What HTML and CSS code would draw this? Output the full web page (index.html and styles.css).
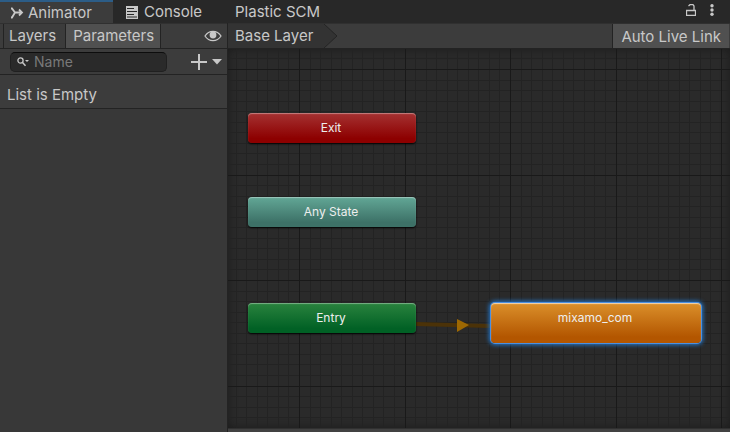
FILE: index.html
```html
<!DOCTYPE html>
<html lang="en">
<head>
<meta charset="utf-8">
<title>Animator</title>
<link rel="stylesheet" href="styles.css">
</head>
<body>
<div class="window">
  <header class="tabs">
    <button class="tab tab-active"><svg width="14" height="12" viewBox="0 0 14 12"><path d="M1 1.5H2L5 5.5H12M1 10.5H2L5 5.5M9 2.5 12 5.5 9 8.5" fill="none" stroke="currentColor" stroke-width="1.8"/></svg>Animator</button>
    <button class="tab tab-console"><svg width="12" height="13" viewBox="0 0 12 13"><path d="M0 0H12V13H0Z" fill="currentColor"/><path d="M1 2.5H8M1 5.5H11M1 8.5H8M1 11H11" stroke="#282828"/></svg>Console</button>
    <button class="tab tab-plastic">Plastic SCM</button>
    <div class="window-actions">
      <button aria-label="Lock"><svg width="10" height="12" viewBox="0 0 10 12"><path d="M.5 6.5H9.5V11.5H.5ZM8 6V2L7 .7H4L2.5 2" fill="none" stroke="currentColor" stroke-width="1.3"/></svg></button>
      <button aria-label="More"><svg width="4" height="12" viewBox="0 0 4 12"><g fill="currentColor"><circle cx="2" cy="1.7" r="1.7"/><circle cx="2" cy="6" r="1.7"/><circle cx="2" cy="10.3" r="1.7"/></g></svg></button>
    </div>
  </header>
  <div class="workspace">
    <aside class="sidebar">
      <div class="toolbar side-toolbar">
        <button class="mode">Layers</button>
        <button class="mode mode-active">Parameters</button>
        <button class="eye" aria-label="Show panel"><svg width="18" height="12" viewBox="0 0 18 12"><path d="M1 6C5-.2 13-.2 17 6 13 12.2 5 12.2 1 6Z" fill="none" stroke="currentColor" stroke-width="1.3"/><circle cx="9" cy="5" r="3.4" fill="currentColor"/></svg></button>
      </div>
      <div class="search-row">
        <label class="search"><svg width="12" height="10" viewBox="0 0 12 10"><circle cx="3.5" cy="3.5" r="2.6" fill="none" stroke="currentColor" stroke-width="1.3"/><path d="M5.3 5.3 8.5 8.8" stroke="currentColor" stroke-width="1.5"/><path d="M8 3H12L10 5Z" fill="currentColor"/></svg><input type="text" placeholder="Name" aria-label="Name"></label>
        <button class="add" aria-label="Add parameter"><svg width="31" height="16" viewBox="0 0 31 16"><path d="M8 0V16M0 8H16" stroke="currentColor" stroke-width="2"/><path d="M21 5H31L26 10.5Z" fill="currentColor"/></svg></button>
      </div>
      <p class="empty">List is Empty</p>
    </aside>
    <main class="editor">
      <div class="toolbar">
        <button class="crumb">Base Layer</button><svg class="chevron" width="15" height="24" viewBox="0 0 15 24"><path d="M0 0 13 12 0 24Z" fill="#333"/><path d="M0 0 13 12 0 24" fill="none" stroke="#252525"/></svg>
        <button class="live">Auto Live Link</button>
      </div>
      <div class="graph">
        <svg class="grid" width="100%" height="100%">
          <defs>
            <pattern id="grid" x="71" y="20" width="211" height="211" patternUnits="userSpaceOnUse">
              <g fill="none" shape-rendering="crispEdges">
                <path stroke="#232323" d="M11.5 0V211M21.5 0V211M32.5 0V211M42.5 0V211M53.5 0V211M63.5 0V211M74.5 0V211M84.5 0V211M95.5 0V211M116.5 0V211M127.5 0V211M137.5 0V211M148.5 0V211M158.5 0V211M169.5 0V211M179.5 0V211M190.5 0V211M200.5 0V211"/>
                <path stroke="#232323" d="M0 11.5H211M0 21.5H211M0 32.5H211M0 42.5H211M0 53.5H211M0 63.5H211M0 74.5H211M0 84.5H211M0 95.5H211M0 116.5H211M0 127.5H211M0 137.5H211M0 148.5H211M0 158.5H211M0 169.5H211M0 179.5H211M0 190.5H211M0 200.5H211"/>
                <path stroke="#191919" d="M.5 0V211M106.5 0V211M0 .5H211M0 106.5H211"/>
              </g>
            </pattern>
          </defs>
          <rect width="100%" height="100%" fill="url(#grid)"/>
          <path d="M188 275 262 277" stroke="#4b3208" stroke-width="4"/>
          <path d="M229 270V283L241 276Z" fill="#9d6803"/>
        </svg>
        <div class="node exit">Exit</div>
        <div class="node any">Any State</div>
        <div class="node entry">Entry</div>
        <div class="node state">mixamo_com</div>
      </div>
      <div class="status"></div>
    </main>
  </div>
</div>
</body>
</html>
```
FILE: styles.css
```css
* {
  box-sizing: border-box;
}

body {
  margin: 0;
  background: #383838;
  color: #c8c8c8;
  font: 15px/24px Inter, sans-serif;
}

button,
input {
  margin: 0;
  padding: 0;
  border: 0;
  background: none;
  color: inherit;
  font: inherit;
  white-space: nowrap;
}

svg {
  display: block;
  flex: none;
}

.window {
  display: flex;
  flex-direction: column;
  min-height: 100vh;
}

.tabs {
  display: flex;
  height: 23px;
  background: #282828;
}

.tab {
  display: flex;
  align-items: center;
  gap: 5px;
  padding: 1px 12px 0;
}

.tab-active {
  width: 113px;
  padding: 0 0 0 10px;
  gap: 4px;
  border-top: 2px solid #2c5d87;
  background: #3c3c3c;
}

.tab-console {
  width: 110px;
  gap: 6px;
  padding-left: 13px;
}

.window-actions {
  display: flex;
  align-items: center;
  gap: 14px;
  margin-left: auto;
  padding: 0 16px 3px 0;
}

.workspace {
  display: flex;
  flex: 1;
}

.sidebar {
  width: 228px;
  border-right: 1px solid #232323;
}

.toolbar {
  display: flex;
  height: 26px;
  border-top: 1px solid #303030;
  border-bottom: 1px solid #232323;
  background: #3c3c3c;
}

.side-toolbar {
  padding-left: 3px;
}

.mode {
  padding: 0 9px 0 5px;
  border-left: 1px solid #232323;
}

.mode-active {
  padding: 0 6px 0 7px;
  border-right: 1px solid #232323;
  background: #505050;
}

.eye {
  margin-left: auto;
  padding-right: 5px;
}

.search-row {
  display: flex;
  align-items: center;
  justify-content: space-between;
  height: 26px;
  padding: 0 5px 0 10px;
  border-bottom: 1px solid #232323;
  background: #3c3c3c;
}

.search {
  display: flex;
  align-items: center;
  gap: 5px;
  width: 157px;
  height: 20px;
  padding-left: 6px;
  border: 1px solid #202020;
  border-top-color: #0d0d0d;
  border-radius: 5px;
  background: #2a2a2a;
}

.search input {
  width: 100px;
  font-size: 14px;
  line-height: 18px;
}

.search input::placeholder {
  color: #797979;
  opacity: 1;
}

.empty {
  height: 34px;
  margin: 0;
  padding: 0 7px;
  border-bottom: 1px solid #232323;
  background: #3c3c3c;
  line-height: 40px;
}

.editor {
  display: flex;
  flex: 1;
  flex-direction: column;
  min-width: 0;
}

.crumb {
  padding-left: 7px;
  width: 96px;
  background: #333;
  text-align: left;
}

.live {
  margin-left: auto;
  margin-right: 1px;
  padding: 1px 8px 0;
  border-left: 1px solid #232323;
  background: #505050;
}

.graph {
  position: relative;
  flex: 1;
  overflow: hidden;
  background: #2a2a2a;
  box-shadow: inset 0 0 10px #1b1b1b;
}

.grid {
  position: absolute;
  inset: 0;
}

.node {
  position: absolute;
  left: 20px;
  width: 168px;
  height: 30px;
  padding-right: 2px;
  border-radius: 4px;
  color: #eee;
  font-size: 12px;
  line-height: 30px;
  text-align: center;
  box-shadow: inset 0 1px 1px #ffffff60, 0 1px 2px #000;
}

.exit {
  top: 64px;
  background: linear-gradient(#a53232, #8d0000 85%);
}

.any {
  top: 148px;
  background: linear-gradient(#62a796, #3d7167 85%);
}

.entry {
  top: 254px;
  background: linear-gradient(#2a833e, #016125 85%);
}

.state {
  top: 254px;
  left: 263px;
  width: 210px;
  height: 40px;
  background: linear-gradient(#db902b, #b35600 85%);
  box-shadow: inset 0 1px 1px #ffffffa0, 0 0 0 1px #4a90e2, 0 0 4px 2px #2478cc;
}

.status {
  height: 4px;
  border-top: 1px solid #303030;
  background: #414141;
}
```
